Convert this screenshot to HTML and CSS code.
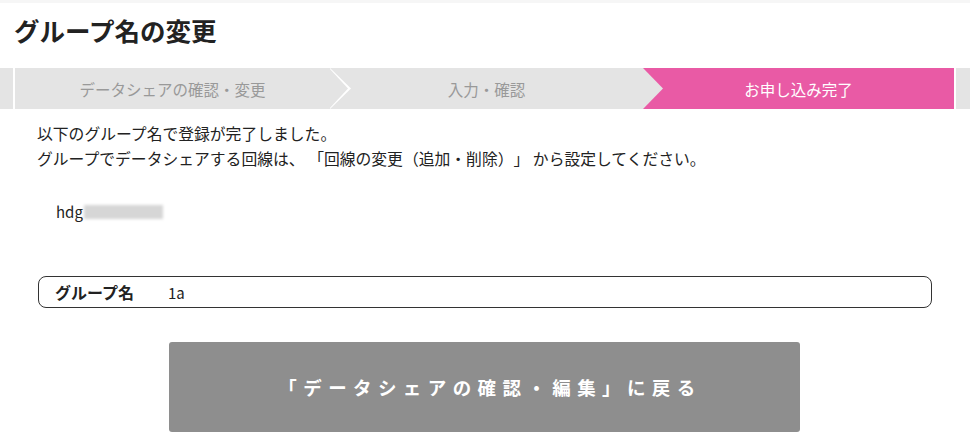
FILE: index.html
```html
<!DOCTYPE html>
<html lang="ja">
<head>
  <meta charset="UTF-8" />
  <title>グループ名の変更</title>
  <link rel="stylesheet" href="styles.css">
</head>
<body>
  <div class="page">
    <h1 class="title">グループ名の変更</h1>
    <div class="steps">
      <div class="edge"></div>
      <div class="step step-1">データシェアの確認・変更</div>
      <div class="step step-2">入力・確認</div>
      <div class="step step-3 current">お申し込み完了</div>
      <div class="edge edge-right"></div>
    </div>
    <div class="content">
      <p class="msg">以下のグループ名で登録が完了しました。<br>グループでデータシェアする回線は、 「回線の変更（追加・削除）」 から設定してください。</p>
      <div class="owner">hdg<span class="masked"></span></div>
      <div class="group-box">
        <span class="label">グループ名</span>
        <span class="value">1a</span>
      </div>
      <div class="actions">
        <button class="back-btn">「データシェアの確認・編集」に戻る</button>
      </div>
    </div>
  </div>
</body>
</html>
```
FILE: styles.css
```css
body { margin:0; background:#fff; color:#333; font-family: "Noto Sans CJK JP", "Noto Sans", sans-serif; text-spacing-trim: space-all; }
.page { border-top:3px solid #f6f6f6; }
.title { margin:0; padding:11px 0 0 14px; height:42px; font-size:25.5px; line-height:32px; font-weight:bold; color:#222; }
.steps { display:flex; height:41px; margin-top:12px; background:#e4e4e4; }
.edge { width:13px; background:#e4e4e4; border-right:2px solid #fff; }
.edge-right { flex:1; border-right:none; border-left:2px solid #fff; }
.step { position:relative; display:flex; align-items:center; justify-content:center; font-size:15.5px; color:#999; background:#e4e4e4; }
.step-1 { width:315px; }
.step-2 { width:313px; }
.step-3 { width:311px; }
.current { background:#e95aa5; color:#fff; }
.step-1::before, .step-1::after, .step-2::after { content:""; position:absolute; top:0; left:100%; height:41px; z-index:2; }
.step-1::before { width:21px; background:#fff; clip-path:polygon(0 0, 100% 50%, 0 100%); }
.step-1::after { width:19px; margin-left:-1px; background:#e4e4e4; clip-path:polygon(0 0, 100% 50%, 0 100%); z-index:3; }
.step-2::after { width:20px; background:#e4e4e4; clip-path:polygon(0 0, 100% 50%, 0 100%); }
.content { padding:12px 38px 0 37px; }
.msg { margin:0; font-size:15.8px; line-height:25px; color:#222; }
.owner { margin:30px 0 0 19px; height:22px; font-size:15px; line-height:22px; color:#222; display:flex; align-items:center; }
.masked { display:inline-block; width:79px; height:14px; margin-left:1px; background:#d6d6d6; filter:blur(1.5px); }
.group-box { margin:53px 0 0 1px; height:30px; border:1.5px solid #333; border-radius:8px; display:flex; align-items:center; padding-left:16px; font-size:15px; color:#222; }
.label { font-weight:bold; width:113px; font-size:16px; }
.actions { display:flex; justify-content:center; margin-top:34px; }
.back-btn { width:631px; height:90px; margin-left:-1px; border:none; border-radius:3px; background:#8e8e8e; color:#fff; font-family: "Noto Sans CJK JP", "Noto Sans", sans-serif; font-size:18.5px; font-weight:bold; letter-spacing:6.4px; padding-left:18px; cursor:pointer; }
```
